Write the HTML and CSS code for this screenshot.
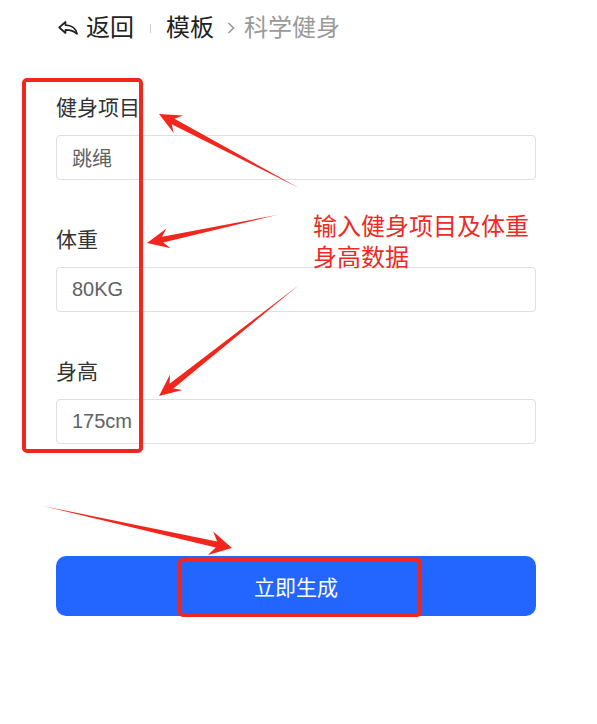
FILE: index.html
```html
<!DOCTYPE html>
<html lang="zh-CN">
<head>
<meta charset="utf-8">
<title>科学健身</title>
<link rel="stylesheet" href="styles.css">
</head>
<body>
<div class="page">
  <div class="header">
    <svg class="back-icon" viewBox="0 0 20 14" width="20" height="14">
      <path d="M1.2 6.5 L7.5 1 L7.5 4.2 C13.5 4.2 18 7.5 19 13 C16 9.8 12.5 8.8 7.5 8.8 L7.5 12 Z" fill="none" stroke="#222" stroke-width="1.7" stroke-linejoin="round"/>
    </svg>
    <span class="crumb">返回</span>
    <span class="sep"></span>
    <span class="crumb">模板</span>
    <svg class="chev" viewBox="0 0 8 12" width="8" height="12">
      <path d="M1.5 1 L6.5 6 L1.5 11" fill="none" stroke="#999" stroke-width="1.6"/>
    </svg>
    <span class="crumb current">科学健身</span>
  </div>

  <div class="form">
    <div class="field">
      <div class="label">健身项目</div>
      <input class="input" type="text" value="跳绳" readonly>
    </div>
    <div class="field">
      <div class="label">体重</div>
      <input class="input" type="text" value="80KG" readonly>
    </div>
    <div class="field">
      <div class="label">身高</div>
      <input class="input" type="text" value="175cm" readonly>
    </div>
  </div>

  <button class="submit" type="button">立即生成</button>
</div>

<svg class="annot" viewBox="0 0 597 724" width="597" height="724">
  <rect x="24" y="80" width="117" height="371" rx="3" fill="none" stroke="#f2261d" stroke-width="4"/>
  <rect x="180" y="560" width="240" height="55" rx="3" fill="none" stroke="#f2261d" stroke-width="4"/>
  <polygon fill="#f2261d" points="299,188 174.5,118.8 183.1,115.5 159,114 173.7,133.1 171.7,124.2"/>
  <polygon fill="#f2261d" points="277,215 162.0,236.7 166.4,228.6 147,243 170.6,248.2 163.2,242.5"/>
  <polygon fill="#f2261d" points="299,285 169.6,383.7 170.0,374.5 159,396 182.4,390.1 173.4,388.5"/>
  <polygon fill="#f2261d" points="43,506 215.8,547.4 207.8,555.0 232,548 213.2,531.4 217.1,541.6"/>
</svg>
<div class="note">输入健身项目及体重<br>身高数据</div>
</body>
</html>
```

FILE: styles.css
```css
html, body {
  margin: 0;
  padding: 0;
  background: #ffffff;
}

body {
  position: relative;
  width: 597px;
  height: 724px;
  overflow: hidden;
  font-family: "Liberation Sans", "Noto Sans CJK SC", sans-serif;
  color: #333333;
}

.page {
  padding: 0 61px 0 56px;
}

.header {
  display: flex;
  align-items: center;
  height: 56px;
  font-size: 24px;
  line-height: 30px;
}

.back-icon {
  margin-left: 2px;
  margin-right: 8px;
  flex: none;
}

.crumb {
  color: #222222;
}

.crumb.current {
  color: #9a9a9a;
}

.sep {
  width: 1px;
  height: 9px;
  background: #cfcfcf;
  margin: 0 15px 0 16px;
}

.chev {
  margin: 0 9px 0 13px;
  flex: none;
}

.form {
  margin-top: 37px;
}

.field + .field {
  margin-top: 45px;
}

.label {
  font-size: 21px;
  line-height: 30px;
  color: #333333;
  margin-bottom: 12px;
}

.input {
  display: block;
  box-sizing: border-box;
  width: 480px;
  height: 45px;
  margin: 0;
  padding: 0 15px;
  border: 1px solid #dcdfe6;
  border-radius: 4px;
  background: #ffffff;
  font-family: "Liberation Sans", "Noto Sans CJK SC", sans-serif;
  font-size: 20px;
  color: #606266;
  outline: none;
}

.submit {
  display: block;
  width: 480px;
  height: 60px;
  margin: 112px 0 0 0;
  padding: 0;
  border: none;
  border-radius: 10px;
  background: #2266ff;
  color: #ffffff;
  font-family: "Liberation Sans", "Noto Sans CJK SC", sans-serif;
  font-size: 21px;
}

.annot {
  position: absolute;
  left: 0;
  top: 0;
  pointer-events: none;
}

.note {
  position: absolute;
  left: 313px;
  top: 211px;
  font-size: 24px;
  line-height: 31px;
  color: #ee2a22;
  white-space: nowrap;
}
```
